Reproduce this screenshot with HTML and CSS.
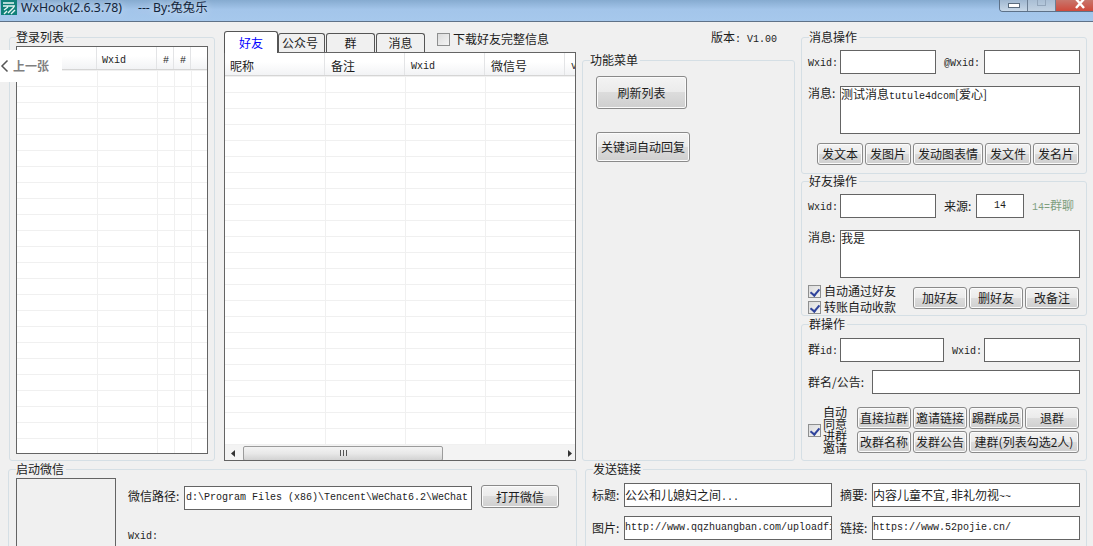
FILE: index.html
```html
<!DOCTYPE html>
<html lang="zh-CN">
<head>
  <meta charset="UTF-8">
  <title>WxHook</title>
  <link rel="stylesheet" href="styles.css">
</head>
<body>
  <div class="window">
    <header class="titlebar">
      <svg class="app-icon" width="16" height="16" viewBox="0 0 16 16">
        <rect width="16" height="15" fill="#0f7f78"/>
        <path d="M2 3h11M2 6h12M3 10l4-3M7 13l6-6M3 14l3-3M10 14l4-4" stroke="#e8f6f3" stroke-width="1.400" fill="none"/>
      </svg>
      <span class="title-text">WxHook(2.6.3.78)</span>
      <span class="title-by">--- By:兔兔乐</span>
      <div class="winbtns">
        <span class="winbtn"><i class="min"></i></span>
        <span class="winbtn off"><i class="max"></i></span>
        <span class="winbtn close">
          <svg width="12" height="9" viewBox="0 0 12 9"><path d="M2 -1l8 9M10 -1l-8 9" stroke="#fff" stroke-width="2.400"/></svg>
        </span>
      </div>
    </header>

    <div class="top-row">
      <fieldset class="group login-group">
        <legend>登录列表</legend>
        <div class="grid-box login-list">
          <div class="grid-head">
            <span class="hc c-nick"></span>
            <span class="hc c-wxid lat">Wxid</span>
            <span class="hc c-h1 lat">#</span>
            <span class="hc c-h2 lat">#</span>
            <span class="hc c-rest"></span>
          </div>
          <div class="grid-rows login-rows"></div>
        </div>
      </fieldset>

      <div class="tabs-col">
        <div class="tabs-head">
          <div class="tabs">
            <span class="tab active">好友</span>
            <span class="tab t-gzh">公众号</span>
            <span class="tab t-qun">群</span>
            <span class="tab t-msg">消息</span>
          </div>
          <label class="check check-off tabs-check"><i class="box"></i>下载好友完整信息</label>
        </div>
        <div class="grid-box friend-list">
          <div class="grid-head">
            <span class="hc f-nick">昵称</span>
            <span class="hc f-note">备注</span>
            <span class="hc f-wxid lat">Wxid</span>
            <span class="hc f-wxh">微信号</span>
            <span class="hc f-more lat">v</span>
          </div>
          <div class="grid-rows friend-rows"></div>
          <div class="hscroll">
            <svg width="5" height="7" viewBox="0 0 5 7"><path d="M4 0v7L0 3.500z" fill="#333"/></svg>
            <div class="track">
              <div class="thumb"><span class="grip"></span></div>
            </div>
            <svg width="5" height="7" viewBox="0 0 5 7"><path d="M1 0v7l4-3.500z" fill="#333"/></svg>
          </div>
        </div>
      </div>

      <div class="menu-col">
        <div class="version">版本<span class="lat">: V1.00</span></div>
        <fieldset class="group menu-group">
          <legend>功能菜单</legend>
          <button class="btn btn-refresh">刷新列表</button>
          <button class="btn btn-auto">关键词自动回复</button>
        </fieldset>
      </div>

      <div class="ops-col">
        <fieldset class="group msg-group">
          <legend>消息操作</legend>
          <div class="row">
            <span class="lbl lat l-wxid">Wxid:</span>
            <span class="field w96"></span>
            <span class="lbl lat l-at">@Wxid:</span>
            <span class="field w96"></span>
          </div>
          <div class="row row-area">
            <span class="lbl l-wxid">消息:</span>
            <div class="field area a-msg">测试消息<span class="lat">tutule4dcom</span>[爱心]</div>
          </div>
          <div class="btn-row">
            <button class="btn b46">发文本</button>
            <button class="btn b46">发图片</button>
            <button class="btn b70">发动图表情</button>
            <button class="btn b46">发文件</button>
            <button class="btn b46">发名片</button>
          </div>
        </fieldset>

        <fieldset class="group friend-group">
          <legend>好友操作</legend>
          <div class="row">
            <span class="lbl lat l-wxid">Wxid:</span>
            <span class="field w96"></span>
            <span class="lbl l-src">来源:</span>
            <span class="field w48 lat center">14</span>
            <span class="hint"><span class="lat">14=</span>群聊</span>
          </div>
          <div class="row row-area">
            <span class="lbl l-wxid">消息:</span>
            <div class="field area a-hello">我是</div>
          </div>
          <div class="friend-foot">
            <div class="checks">
              <label class="check"><i class="box on"></i>自动通过好友</label>
              <label class="check"><i class="box on"></i>转账自动收款</label>
            </div>
            <div class="btn-row foot-btns">
              <button class="btn b54">加好友</button>
              <button class="btn b54">删好友</button>
              <button class="btn b54">改备注</button>
            </div>
          </div>
        </fieldset>

        <fieldset class="group qun-group">
          <legend>群操作</legend>
          <div class="row">
            <span class="lbl l-wxid">群<span class="lat">id:</span></span>
            <span class="field w104"></span>
            <span class="lbl lat l-qwxid">Wxid:</span>
            <span class="field w96"></span>
          </div>
          <div class="row row-gap">
            <span class="lbl l-notice">群名/公告:</span>
            <span class="field w208"></span>
          </div>
          <div class="qun-foot">
            <i class="box on"></i>
            <span class="tall-label">自动<br>同意<br>进群<br>邀请</span>
            <div class="qun-btns">
              <button class="btn">直接拉群</button>
              <button class="btn">邀请链接</button>
              <button class="btn">踢群成员</button>
              <button class="btn">退群</button>
              <button class="btn">改群名称</button>
              <button class="btn">发群公告</button>
              <button class="btn span2">建群(列表勾选2人)</button>
            </div>
          </div>
        </fieldset>
      </div>
    </div>

    <div class="bottom-row">
      <fieldset class="group start-group">
        <legend>启动微信</legend>
        <div class="qr-box"></div>
        <div class="start-right">
          <div class="row">
            <span class="lbl l-path">微信路径:</span>
            <span class="field w288 lat path">d:\Program Files (x86)\Tencent\WeChat6.2\WeChat</span>
            <button class="btn btn-open">打开微信</button>
          </div>
          <div class="lat start-wxid">Wxid:</div>
        </div>
      </fieldset>
      <fieldset class="group link-group">
        <legend>发送链接</legend>
        <div class="row">
          <span class="lbl l-link">标题:</span>
          <span class="field w208">公公和儿媳妇之间<span class="lat">...</span></span>
          <span class="lbl l-sum">摘要:</span>
          <span class="field w208">内容儿童不宜<span class="lat">,</span>非礼勿视<span class="lat">~~</span></span>
        </div>
        <div class="row row-link2">
          <span class="lbl l-link">图片:</span>
          <span class="field w208 lat">http://www.qqzhuangban.com/uploadfi</span>
          <span class="lbl l-sum">链接:</span>
          <span class="field w208 lat">https://www.52pojie.cn/</span>
        </div>
      </fieldset>
    </div>

    <div class="prev-tip"><svg width="9" height="14" viewBox="0 0 9 14"><path d="M7.500 1.500L2 7l5.500 5.500" stroke="#555" stroke-width="1.500" fill="none"/></svg><span>上一张</span></div>
  </div>
</body>
</html>
```

FILE: styles.css
```css
* { box-sizing: border-box; margin: 0; padding: 0; }
html, body { width: 1093px; height: 546px; overflow: hidden; }
body { background: #f0f0f0; color: #1c1c1c; font-family: "Noto Sans CJK SC", sans-serif; font-size: 12px; line-height: 14px; }
.window { position: relative; width: 1093px; height: 546px; overflow: hidden; }
.lat { font-family: "Liberation Mono", "Noto Sans CJK SC", monospace; font-size: 10px; }

/* title bar */
.titlebar {
  height: 22px;
  display: flex;
  align-items: flex-start;
  padding-left: 1px;
  background: linear-gradient(#86abd0, #a3c5ea 45%, #a6c8ec);
  border-bottom: 1px solid #5f7288;
}
.app-icon { flex: none; }
.title-text { font-family: "Noto Sans", sans-serif; font-size: 12.300px; line-height: 15px; margin-left: 4px; color: #12243a; text-shadow: 0 0 8px rgba(255,255,255,.8); }
.title-by { font-family: "Noto Sans", "Noto Sans CJK SC", sans-serif; font-size: 12.300px; line-height: 15px; margin-left: 16px; color: #12243a; text-shadow: 0 0 8px rgba(255,255,255,.8); }
.winbtns { margin-left: auto; display: flex; height: 12px; border: 1px solid #5d7188; border-top: 0; border-right: 0; border-radius: 0 0 0 4px; overflow: hidden; }
.winbtn { width: 28px; display: flex; align-items: flex-start; justify-content: center; background: linear-gradient(#9fb7d0, #c8d8e8); border-right: 1px solid #6c7f94; }
.winbtn.off { background: linear-gradient(#a9bed4, #c3d3e3); }
.winbtn.close { width: 37px; border-right: 0; justify-content: flex-start; padding-left: 18px; background: linear-gradient(#c8766c, #cf4a3c); }
.winbtn .min { width: 12px; height: 5px; margin-top: 3px; background: #fff; border: 1px solid #5a6b7d; }
.winbtn .max { width: 9px; height: 6px; border: 1px solid #93a6bb; border-top: 0; }

/* groups */
.group { border: 1px solid #d5dfe5; border-radius: 3px; min-width: 0; }
.group legend { margin-left: 7px; padding-right: 2px; font-size: 12px; line-height: 14px; }

.top-row { display: flex; height: 440px; padding-left: 9px; }
.login-group { width: 206px; height: 431px; margin-top: 8px; padding-top: 2px; }
.login-group legend { margin-left: 6px; }

/* list views */
.grid-box { border: 1px solid #646464; background: #fff; position: relative; overflow: hidden; }
.grid-head { display: flex; height: 23px; background: linear-gradient(#fff, #fff 40%, #f2f3f5); border-bottom: 1px solid #d5d5d5; }
.hc { display: flex; align-items: center; padding: 3px 0 0 6px; border-right: 1px solid #e3e4e6; flex: none; }
.hc.lat { padding-top: 6px; }
.login-list { height: 408px; margin: 0 6px; }
.login-rows { height: 383px; background-image: linear-gradient(#f0f0f0 1px, transparent 1px), linear-gradient(90deg, #f0f0f0 1px, transparent 1px), linear-gradient(90deg, #f0f0f0 1px, transparent 1px), linear-gradient(90deg, #f0f0f0 1px, transparent 1px), linear-gradient(90deg, #f0f0f0 1px, transparent 1px); background-size: 100% 16px, 1px 100%, 1px 100%, 1px 100%, 1px 100%; background-position: 0 16px, 80px 0, 140px 0, 157px 0, 174px 0; background-repeat: repeat, no-repeat, no-repeat, no-repeat, no-repeat; }
.c-nick { width: 80px; }
.c-wxid { width: 60px; padding-left: 5px; }
.hc.c-h1, .hc.c-h2 { width: 17px; padding-left: 6px; }
.c-rest { flex: 1; border-right: 0; }

.tabs-col { width: 352px; margin-left: 9px; }
.tabs-head { height: 30px; display: flex; align-items: flex-end; position: relative; }
.tabs { display: flex; align-items: flex-end; height: 22px; }
.tab { height: 19px; border: 1px solid #555; border-bottom: 0; border-radius: 3px 3px 0 0; display: flex; align-items: center; justify-content: center; margin-right: 1px; background: #f0f0f0; }
.tab.active { width: 54px; height: 22px; color: #0000ff; margin-right: 0; background: #fff; margin-bottom: -1px; position: relative; z-index: 1; }
.t-gzh { width: 47px; padding-right: 3px; }
.t-qun { width: 49px; }
.t-msg { width: 49px; }
.tabs-check { position: absolute; left: 213px; top: 9px; }

.friend-list { height: 409px; }
.friend-rows { height: 369px; background-image: linear-gradient(#f0f0f0 1px, transparent 1px), linear-gradient(90deg, #f0f0f0 1px, transparent 1px), linear-gradient(90deg, #f0f0f0 1px, transparent 1px), linear-gradient(90deg, #f0f0f0 1px, transparent 1px); background-size: 100% 16px, 1px 100%, 1px 100%, 1px 100%; background-position: 0 16px, 100px 0, 180px 0, 260px 0; background-repeat: repeat, no-repeat, no-repeat, no-repeat; }
.hc.f-nick { width: 100px; padding-left: 5px; }
.f-note { width: 80px; }
.f-wxid { width: 80px; }
.f-wxh { width: 80px; }
.f-more { flex: 1; border-right: 0; overflow: hidden; }

.hscroll { height: 16px; display: flex; align-items: center; justify-content: space-between; padding: 0 3px 0 6px; background: #f3f3f3; }
.track { flex: 1; padding-left: 7px; }
.thumb { width: 200px; height: 15px; border: 1px solid #9b9b9b; border-radius: 2px; background: linear-gradient(#f3f3f3, #e8e8e8 50%, #d2d2d2); display: flex; align-items: center; justify-content: center; }
.grip { width: 7px; height: 6px; background: repeating-linear-gradient(90deg, #555 0 1px, transparent 1px 3px); }

/* menu column */
.menu-col { width: 213px; margin-left: 6px; position: relative; }
.version { position: absolute; right: 18px; top: 8px; white-space: nowrap; }
.menu-group { margin-top: 31px; height: 408px; padding-top: 9px; display: flex; flex-direction: column; align-items: flex-start; }

/* buttons */
.btn { font: inherit; color: #1c1c1c; border: 1px solid #8a8a8a; border-radius: 3px; background: linear-gradient(#f3f3f3, #ebebeb 48%, #dcdcdc 50%, #cfcfcf); box-shadow: inset 0 0 0 1px #fbfbfb; display: flex; align-items: center; justify-content: center; white-space: nowrap; }
.btn-refresh { width: 91px; height: 33px; margin-left: 13px; }
.btn-auto { width: 94px; height: 30px; margin: 23px 0 0 13px; }
.b46 { width: 46px; height: 22px; }
.b54 { width: 54px; height: 22px; }
.b70 { width: 70px; height: 22px; }

/* right ops */
.ops-col { width: 286px; margin-left: 6px; display: flex; flex-direction: column; }
.row { display: flex; align-items: center; }
.lbl { flex: none; white-space: nowrap; }
.lbl.lat { padding-top: 4px; }
.field { display: block; flex: none; background: #fff; border: 1px solid #646464; height: 24px; line-height: 22px; white-space: nowrap; overflow: hidden; }
.w96 { width: 96px; }
.w48 { width: 48px; }
.w104 { width: 104px; }
.w208 { width: 208px; }
.center { text-align: center; }
.area { line-height: 14px; white-space: normal; }
.l-wxid { width: 32px; margin-left: 6px; }
.row-area { align-items: flex-start; margin-top: 12px; }
.a-msg, .a-hello { width: 240px; height: 48px; }

.msg-group { height: 144px; margin-top: 8px; padding-top: 6px; }
.l-at { width: 48px; padding-left: 8px; }
.btn-row { display: flex; gap: 2px; margin-top: 9px; padding-left: 15px; }

.friend-group { height: 142px; padding-top: 6px; }
.l-src { width: 40px; padding-left: 8px; }
.hint { margin-left: 8px; color: #7f9f7f; white-space: nowrap; }

.friend-foot { display: flex; margin-top: 5px; padding-left: 6px; }
.checks { width: 105px; }
.check { display: flex; align-items: center; gap: 3px; height: 16px; white-space: nowrap; }
.box { flex: none; width: 13px; height: 13px; border: 1px solid #8e8f8f; background: linear-gradient(135deg, #dcdcdc, #f4f4f4); display: inline-block; position: relative; }
.box.on::after { content: ""; position: absolute; left: 3px; top: 1px; width: 4px; height: 7px; border: solid #30449c; border-width: 0 2px 2px 0; transform: rotate(40deg); }
.foot-btns { padding-left: 0; margin-top: 4px; }

.qun-group { height: 144px; margin-top: 1px; padding-top: 7px; }
.l-qwxid { width: 40px; padding-left: 8px; }
.row-gap { margin-top: 8px; }
.l-notice { width: 64px; margin-left: 6px; }
.qun-foot { display: flex; align-items: center; margin-top: 12px; padding-left: 6px; }
.tall-label { width: 24px; margin-left: 2px; line-height: 12px; text-align: center; }
.qun-btns { display: grid; grid-template-columns: repeat(4, 54px); grid-auto-rows: 22px; gap: 2px; margin-left: 10px; }
.span2 { grid-column: span 2; }

/* bottom */
.bottom-row { display: flex; padding-left: 8px; }
.start-group { width: 569px; height: 96px; padding-top: 2px; display: flex; }
.qr-box { width: 100px; height: 80px; margin-left: 7px; border: 1px solid #646464; flex: none; }
.start-right { margin: 7px 0 0 12px; }
.l-path { width: 56px; margin-bottom: 3px; }
.w288 { width: 288px; }
.path { padding-left: 1px; }
.btn-open { width: 78px; height: 23px; margin: 0 0 2px 9px; }
.start-wxid { margin-top: 20px; }

.link-group { width: 502px; height: 96px; margin-left: 8px; padding-top: 7px; }
.l-link { width: 37px; margin-left: 1px; padding-left: 5px; }
.l-sum { width: 40px; padding-left: 8px; }
.row-link2 { margin-top: 9px; }

/* overlay from the image viewer */
.prev-tip { position: absolute; left: 0; top: 50px; width: 62px; height: 32px; background: #fff; display: flex; align-items: center; gap: 4px; }
.prev-tip span { color: #808080; font-weight: 700; font-size: 12px; }
```
